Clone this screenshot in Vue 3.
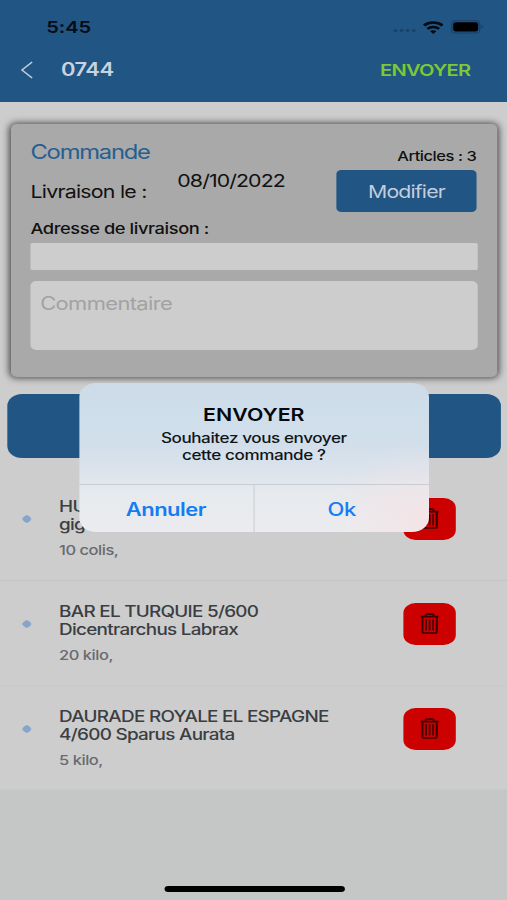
<script setup>
const items = [
  { lines: ['HU', 'gig'], qty: '10 colis,' },
  { lines: ['BAR EL TURQUIE 5/600', 'Dicentrarchus Labrax'], qty: '20 kilo,' },
  { lines: ['DAURADE ROYALE EL ESPAGNE', '4/600 Sparus Aurata'], qty: '5 kilo,' },
]
</script>

<template>
  <div class="screen">
    <header class="header">
      <div class="status">
        <span class="time">5:45</span>
        <div class="indicators">
          <span class="signal"><i></i><i></i><i></i><i></i></span>
          <svg class="wifi" viewBox="0 0 17 13" width="17" height="13">
            <g fill="none" stroke="#050b12" stroke-width="2.500">
              <path d="M.9 4.500C5.200.5 11.800.5 16.100 4.500" />
              <path d="M3.700 7.900C6.400 5.300 10.600 5.300 13.300 7.900" />
            </g>
            <path d="M8.500 12.900L5.900 10.300C7.300 8.900 9.700 8.900 11.100 10.300Z" fill="#050b12" />
          </svg>
          <svg class="battery" viewBox="0 0 27 14" width="27" height="14">
            <rect x=".6" y=".8" width="23" height="12.200" rx="3" fill="none" stroke="#193f65" stroke-width="1" />
            <rect x="1.900" y="2.300" width="20.400" height="9.200" rx="2" fill="#000" />
            <path d="M25 5c1.700.5 1.700 3.100 0 3.600z" fill="#183f64" />
          </svg>
        </div>
      </div>
      <nav class="nav">
        <svg class="back" viewBox="0 0 10 18" width="10" height="18">
          <path d="M9.400 1L1 9l8.400 8" fill="none" stroke="#c3cddb" stroke-width="1.300" />
        </svg>
        <h1 class="title">0744</h1>
        <span class="send">ENVOYER</span>
      </nav>
    </header>

    <section class="card">
      <div class="card-top">
        <div class="card-left">
          <h2 class="heading">Commande</h2>
          <div class="delivery">
            <span class="label">Livraison le :</span>
            <span class="date">08/10/2022</span>
          </div>
        </div>
        <div class="card-right">
          <span class="count">Articles : 3</span>
          <button class="edit">Modifier</button>
        </div>
      </div>
      <div class="address-label">Adresse de livraison :</div>
      <div class="address"></div>
      <div class="comment">Commentaire</div>
    </section>

    <div class="add"></div>

    <ul class="list">
      <li v-for="item in items" :key="item.qty" class="row">
        <svg class="dot" viewBox="0 0 8 8" width="8" height="8">
          <path d="M4 .1L6.300 1.500 7.900 4 6.300 6.500 4 7.900 1.700 6.500.1 4 1.700 1.500Z" fill="#86a5cb" />
        </svg>
        <div class="info">
          <div v-for="line in item.lines" :key="line" class="name">{{ line }}</div>
          <div class="qty">{{ item.qty }}</div>
        </div>
        <button class="delete">
          <svg viewBox="0 0 15 21" width="15" height="21">
            <g fill="none" stroke="#3c0000" stroke-width="1.700">
              <path d="M0 3.700H15" />
              <path d="M4.200 3.500V2.200Q4.200 1.100 5.300 1.100H9.700Q10.800 1.100 10.800 2.200V3.500" />
              <path d="M1.600 4V18.300Q1.600 20 3.200 20H11.800Q13.400 20 13.400 18.300V4" />
              <path d="M4.600 6.300V17.600M7.500 6.300V17.600M10.400 6.300V17.600" stroke-width="1.400" />
            </g>
          </svg>
        </button>
      </li>
    </ul>

    <div class="home"></div>

    <div class="dialog">
      <div class="message">
        <strong class="dialog-title">ENVOYER</strong>
        <span class="line first">Souhaitez vous envoyer</span>
        <span class="line second">cette commande ?</span>
      </div>
      <div class="actions">
        <button class="action cancel">Annuler</button>
        <button class="action ok">Ok</button>
      </div>
    </div>
  </div>
</template>

<style>
body {
  margin: 0;
  overflow: hidden;
  background: #c5c7c6;
}
</style>

<style scoped>
* {
  box-sizing: border-box;
}
.screen {
  position: relative;
  display: flex;
  flex-direction: column;
  width: 416px;
  height: 900px;
  overflow: hidden;
  transform: scaleX(1.21875);
  transform-origin: 0 0;
  background: linear-gradient(#cdcdcd 0 789px, #c5c7c6 790px);
  font-family: Inter, "Liberation Sans", sans-serif;
  font-weight: 450;
  color: #111;
  white-space: nowrap;
}
button {
  border: 0;
  padding: 0;
  font: inherit;
  background: none;
}
.header {
  height: 101.500px;
  flex: none;
  background: #215583;
}
.status {
  display: flex;
  justify-content: space-between;
  height: 47px;
  padding: 17px 20px 0 38px;
}
.time {
  font-size: 16.500px;
  line-height: 20px;
  font-weight: 600;
  letter-spacing: -.1px;
  color: #060c14;
}
.indicators {
  display: flex;
  height: 20px;
  align-items: center;
}
.signal {
  display: flex;
  gap: 2px;
  margin: 7px 6px 0 0;
}
.signal i {
  width: 3px;
  height: 3px;
  border-radius: 50%;
  background: #194268;
}
.wifi {
  margin-right: 6px;
}
.battery {
  margin-right: -.5px;
}
.nav {
  display: flex;
  align-items: center;
  height: 45px;
  padding: 0 30px 0 17px;
}
.title {
  margin: 0 0 0 23px;
  font-size: 18px;
  font-weight: 600;
  letter-spacing: -.4px;
  color: #c9d3df;
}
.send {
  margin-left: auto;
  padding-top: 1px;
  font-size: 16.500px;
  font-weight: 600;
  letter-spacing: -.6px;
  color: #7cc935;
}
.card {
  height: 253px;
  flex: none;
  margin: 22.500px 8.200px 0 9px;
  padding: 16px 16px 0;
  border-radius: 5px;
  background: #a9a9a9;
  box-shadow: 0 0 7px 1px rgba(0, 0, 0, .65);
}
.card-top {
  display: flex;
  justify-content: space-between;
  height: 72px;
}
.heading {
  margin: 0;
  font-size: 19.500px;
  line-height: 24px;
  font-weight: 400;
  letter-spacing: -1px;
  color: #265e90;
}
.delivery {
  display: flex;
  padding-top: 6px;
  font-size: 17.500px;
  line-height: 22px;
  font-weight: 400;
  letter-spacing: -.62px;
}
.date {
  letter-spacing: -.75px;
}
.label {
  width: 120.500px;
  padding-top: 11px;
}
.card-right {
  display: flex;
  flex-direction: column;
  align-items: flex-end;
  padding-top: 7px;
}
.count {
  padding: 1px 1px 0 0;
  font-size: 13.500px;
  line-height: 16px;
  letter-spacing: -.36px;
}
.edit {
  width: 115px;
  height: 42.500px;
  margin: 6px .8px 0 0;
  border-radius: 4px;
  background: #215583;
  color: #c3cddb;
  font-size: 17.500px;
  font-weight: 400;
  letter-spacing: -.7px;
}
.address-label {
  margin-top: 8px;
  font-size: 15px;
  line-height: 18px;
  letter-spacing: -.35px;
}
.address {
  height: 27px;
  margin-top: 5px;
  border-radius: 1.500px;
  background: #cdcdcd;
}
.comment {
  height: 69px;
  margin-top: 11px;
  padding: 12px 8px;
  border-radius: 5px;
  background: #cdcdcd;
  font-size: 18px;
  line-height: 22px;
  font-weight: 400;
  letter-spacing: -.53px;
  color: #a2a2a2;
}
.add {
  height: 64px;
  flex: none;
  margin: 17px 5px 0 6px;
  border-radius: 12px;
  background: #215583;
}
.list {
  margin: 17.500px 0 0;
  padding: 0;
  list-style: none;
}
.row {
  display: flex;
  align-items: flex-start;
  height: 105px;
  padding: 22px 42.200px 0 18px;
  border-bottom: 1px solid #c3c3c3;
}
.row:nth-child(2) {
  border-color: #c8c8c8;
}
.row:last-child {
  border: 0;
}
.dot {
  margin-top: 17px;
}
.info {
  flex: 1;
  margin-left: 22.500px;
}
.name {
  font-size: 15.500px;
  line-height: 18px;
  letter-spacing: -.6px;
  color: #3b3e42;
}
.qty {
  margin-top: 8.500px;
  font-size: 13.500px;
  line-height: 16px;
  letter-spacing: -.38px;
  color: #686b6f;
}
.delete {
  display: flex;
  align-items: center;
  justify-content: center;
  width: 43px;
  height: 42.500px;
  border-radius: 10px;
  background: #cd0000;
}
.home {
  width: 148px;
  height: 5.500px;
  margin: auto auto 8.500px 134.500px;
  border-radius: 3px;
  background: #000;
}
.dialog {
  position: absolute;
  left: 64.500px;
  top: 383px;
  width: 287.500px;
  height: 149px;
  border-radius: 14px;
  overflow: hidden;
  background:
    radial-gradient(circle at 98% 92%, rgba(246, 226, 228, .75), rgba(246, 228, 230, 0) 75px),
    linear-gradient(#cddbe7 0, #cfdeeb 20%, #d2dfeb 42%, #dde4ec 62%, #e6e9ed 72%, #ebecef 100%);
}
.message {
  display: flex;
  flex-direction: column;
  align-items: center;
  height: 102px;
  padding-top: 21px;
  border-bottom: 1px solid #c8ced4;
}
.dialog-title {
  font-size: 17.500px;
  line-height: 22px;
  font-weight: 600;
  color: #05080b;
}
.line {
  margin-top: 3px;
  font-size: 14px;
  line-height: 17px;
  letter-spacing: -.33px;
  color: #10151a;
}
.line.second {
  margin-top: 0;
}
.actions {
  display: flex;
  height: 47px;
}
.action {
  flex: 1;
  padding-top: 1px;
  font-size: 18px;
  color: #147cf4;
}
.cancel {
  border-right: 1px solid #ced2d6;
  font-weight: 600;
  letter-spacing: -.4px;
}
.ok {
  letter-spacing: -.3px;
}
</style>
